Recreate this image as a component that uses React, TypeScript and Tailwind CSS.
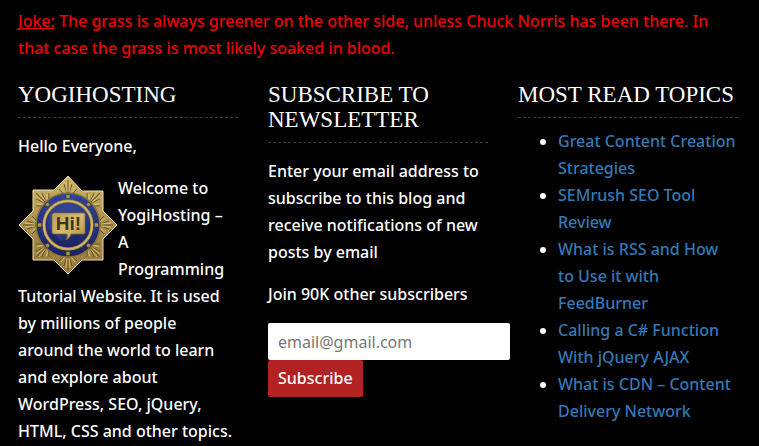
import type { ReactNode } from "react";

const topics = [
  ["Great Content Creation", "Strategies"],
  ["SEMrush SEO Tool", "Review"],
  ["What is RSS and How", "to Use it with", "FeedBurner"],
  ["Calling a C# Function", "With jQuery AJAX"],
  ["What is CDN – Content", "Delivery Network"],
];

const quarterTurns = [0, 90, 180, 270];
const eighthTurns = [0, 45, 90, 135, 180, 225, 270, 315];

function Badge() {
  return (
    <svg viewBox="0 0 100 100" className="float-left h-[100px] w-[100px]" role="img" aria-label="Hi badge">
      <defs>
        <linearGradient id="gold" x1="0" y1="0" x2="0" y2="1">
          <stop offset="0" stopColor="#cdb56a" />
          <stop offset="0.5" stopColor="#a88f4c" />
          <stop offset="1" stopColor="#94793a" />
        </linearGradient>
        <linearGradient id="blue" x1="0" y1="0" x2="0" y2="1">
          <stop offset="0" stopColor="#31439b" />
          <stop offset="1" stopColor="#19215f" />
        </linearGradient>
        <linearGradient id="plate" x1="0" y1="0" x2="1" y2="1">
          <stop offset="0" stopColor="#b99c4c" />
          <stop offset="0.5" stopColor="#d6bd72" />
          <stop offset="1" stopColor="#aa8b3b" />
        </linearGradient>
      </defs>
      <path
        d="M50 1 64 16H85V36L99 50 85 64V85H64L50 99 36 85H15V64L1 50 15 36V15H36Z"
        fill="url(#gold)"
        stroke="#eee0b0"
        strokeWidth="1"
      />
      {eighthTurns.map((angle) => (
        <g key={angle} transform={`rotate(${angle} 50 50)`} fill="none">
          <path d="M50 5V18M46 9 49 18M54 9 51 18M41 14 46 19M59 14 54 19" stroke="#6b5726" strokeWidth="1" />
          <path d="M48 7 49 17M52 7 51 17M43 13 47 18M57 13 53 18" stroke="#dcc679" strokeWidth="0.9" />
        </g>
      ))}
      <circle cx="50" cy="50" r="32" fill="url(#blue)" stroke="#8b7336" strokeWidth="1.5" />
      <path d="M30 35 50 25 70 35 61 42 50 31 40 41Z" fill="#4960b5" opacity="0.4" />
      {quarterTurns.map((angle) => (
        <g key={angle} transform={`rotate(${angle} 50 50)`} fill="#ad954f" stroke="#4c4430" strokeWidth="0.7">
          <rect x="48" y="19.5" width="4" height="4" rx="1" />
          <circle cx="70.5" cy="29.5" r="2" />
        </g>
      ))}
      <circle cx="50" cy="50" r="24" fill="url(#blue)" stroke="#8b7030" strokeWidth="3.4" />
      <circle cx="50" cy="50" r="24" fill="none" stroke="#cdb56c" strokeWidth="2.2" />
      <path d="M31 40 50 29 69 40 64 56 43 66 30 52Z" fill="#3b50a4" opacity="0.35" />
      <path
        d="M36 38H66Q67 38 67 39V58Q67 59 66 59H53Q52 63 48 65 50 62 49 59H36Q34 59 34 57V40Q34 38 36 38Z"
        fill="url(#plate)"
        stroke="#83682c"
        strokeWidth="0.8"
      />
      <text
        x="50.5"
        y="55"
        textAnchor="middle"
        fontFamily="'Liberation Sans', sans-serif"
        fontSize="19"
        fontWeight="700"
        fill="#40351b"
      >
        Hi!
      </text>
    </svg>
  );
}

function Lines({ lines }: { lines: string[] }) {
  return lines.map((line) => (
    <span key={line} className="block">
      {line}
    </span>
  ));
}

function Heading({ children }: { children: ReactNode }) {
  return (
    <h3 className="border-b border-dashed border-[#3b3b3b] pb-[10px] font-['Liberation_Serif',serif] text-[23px] leading-[25px] font-normal uppercase">
      {children}
    </h3>
  );
}

export default function App() {
  return (
    <footer className="min-h-screen bg-black pt-2 pr-[21px] pl-[18px] font-['Noto_Sans','Open_Sans',sans-serif] text-base leading-[27px] font-medium text-white">
      <p className="text-[#f00000]">
        <u>Joke:</u> The grass is always greener on the other side, unless Chuck Norris has been there. In
        <br />
        that case the grass is most likely soaked in blood.
      </p>
      <div className="mt-5 grid grid-cols-3 gap-[30px]">
        <section>
          <Heading>YogiHosting</Heading>
          <p className="mt-[15px]">Hello Everyone,</p>
          <div className="mt-[15px]">
            <Badge />
            <p>
              <Lines
                lines={[
                  "Welcome to",
                  "YogiHosting –",
                  "A",
                  "Programming",
                  "Tutorial Website. It is used",
                  "by millions of people",
                  "around the world to learn",
                  "and explore about",
                  "WordPress, SEO, jQuery,",
                  "HTML, CSS and other topics.",
                ]}
              />
            </p>
          </div>
        </section>
        <section>
          <Heading>Subscribe to Newsletter</Heading>
          <p className="mt-[15px]">Enter your email address to subscribe to this blog and receive notifications of new posts by email</p>
          <p className="mt-[15px]">Join 90K other subscribers</p>
          <form className="mt-[15px] flex flex-col items-start" onSubmit={(event) => event.preventDefault()}>
            <input
              type="email"
              aria-label="Email address"
              placeholder="email@gmail.com"
              className="h-[37px] w-[110%] rounded-xs bg-white px-[10px] font-normal text-black placeholder:text-[#777777]"
            />
            <button type="submit" className="h-[37px] rounded-xs bg-[#b22222] px-[10px]">
              Subscribe
            </button>
          </form>
        </section>
        <section>
          <Heading>Most Read Topics</Heading>
          <ul className="mt-[10px] list-disc pl-10">
            {topics.map((lines) => (
              <li key={lines[0]}>
                <a href="#" className="block text-[#337ab7]">
                  <Lines lines={lines} />
                </a>
              </li>
            ))}
          </ul>
        </section>
      </div>
    </footer>
  );
}
